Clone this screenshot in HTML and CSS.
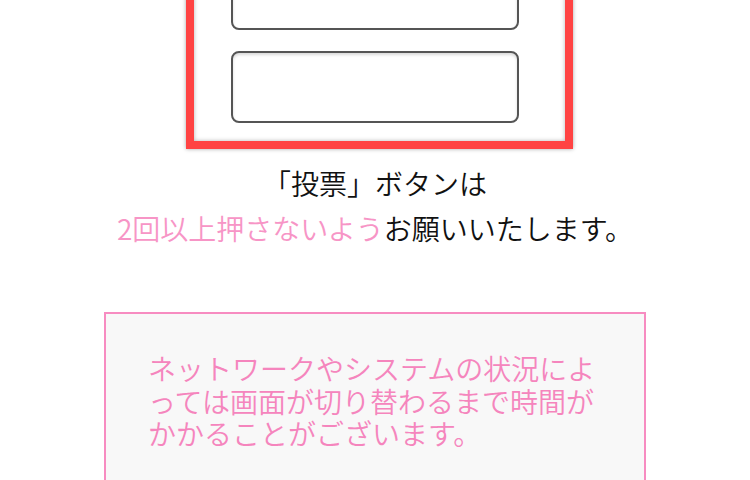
FILE: index.html
```html
<!DOCTYPE html>
<html lang="ja">

<head>
    <meta charset="UTF-8">
    <meta name="viewport" content="width=device-width, initial-scale=1.0">
    <title>投票</title>
    <link rel="stylesheet" href="styles.css">
</head>

<body>

    <div class="page">
        <div class="vote-box">
            <input class="vote-input" type="text" name="first">
            <input class="vote-input" type="text" name="second">
        </div>

        <p class="notice">
            「投票」ボタンは<br>
            <span class="pink">2回以上押さないよう</span>お願いいたします。
        </p>

        <div class="info-box">
            <p>ネットワークやシステムの状況によっては画面が切り替わるまで時間がかかることがございます。</p>
        </div>
    </div>

</body>

</html>
```

FILE: styles.css
```css
body {
    margin: 0;
    background-color: #fff;
    font-family: "Noto Sans CJK JP", "Liberation Sans", sans-serif;
    font-weight: 350;
    overflow: hidden;
}

.page {
    display: flex;
    flex-direction: column;
    align-items: center;
    margin-top: -68px;
}

.vote-box {
    display: flex;
    flex-direction: column;
    gap: 21px;
    width: 387px;
    box-sizing: border-box;
    margin-left: 9px;
    padding: 18px 46px 18px 37px;
    border: 8px solid #ff4343;
    background-color: #fff;
    box-shadow: 0 0 4px rgba(0, 0, 0, 0.35), inset 0 0 4px rgba(0, 0, 0, 0.3);
}

.vote-input {
    display: block;
    width: 288px;
    height: 72px;
    box-sizing: border-box;
    margin: 0;
    border: 2px solid #555;
    border-radius: 8px;
    background-color: #fff;
    box-shadow: inset 0 2px 3px rgba(0, 0, 0, 0.15);
}

.notice {
    margin: 12px 0 0;
    font-size: 28px;
    line-height: 45px;
    color: #111;
    text-align: center;
}

.pink {
    color: #f795c6;
}

.info-box {
    width: 542px;
    height: 220px;
    box-sizing: border-box;
    margin-top: 61px;
    padding: 38px 42px;
    border: 2px solid #f78cc1;
    background-color: #f8f8f8;
}

.info-box p {
    margin: 0;
    font-size: 28px;
    line-height: 32.5px;
    color: #f585bd;
}
```
